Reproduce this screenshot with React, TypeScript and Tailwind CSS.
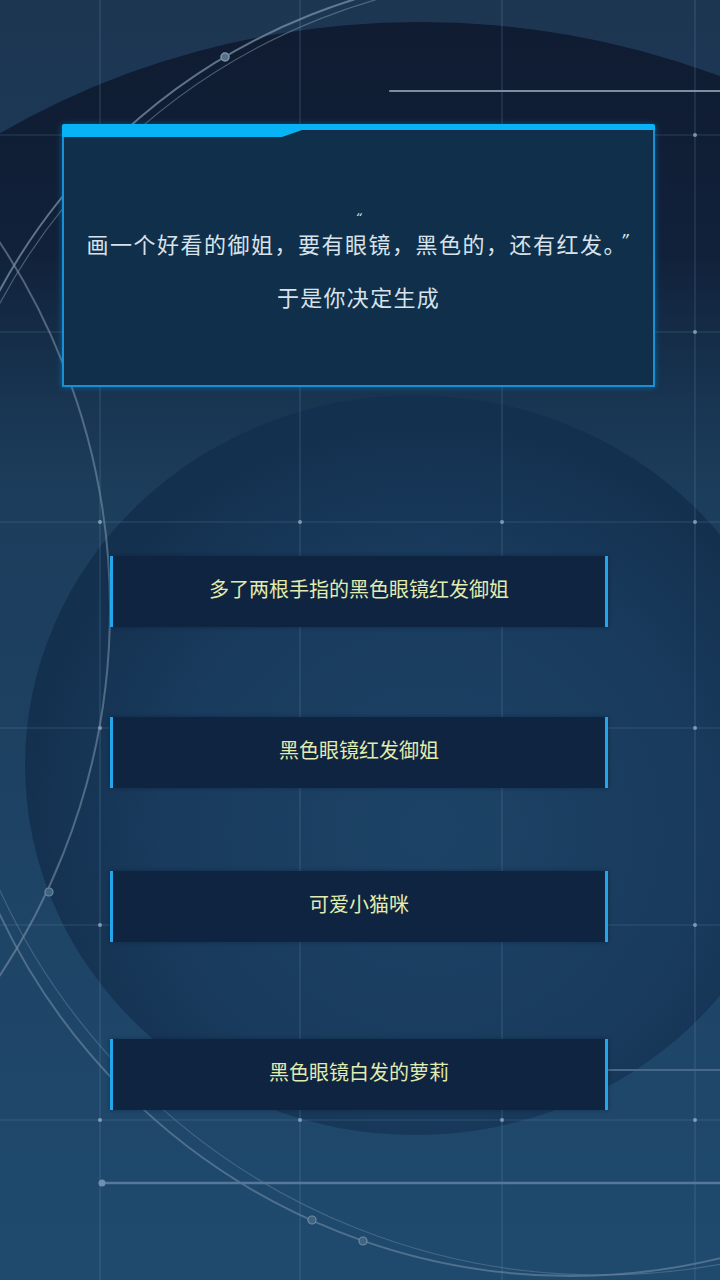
import React from "react";

const vLines = [100, 300, 502, 695];
const hLines = [135, 332, 522, 728, 925, 1120];

function Background() {
  return (
    <svg
      width={720}
      height={1280}
      viewBox="0 0 720 1280"
      className="absolute inset-0"
    >
      <defs>
        <linearGradient id="bg" x1="0" y1="0" x2="0" y2="1280" gradientUnits="userSpaceOnUse">
          <stop offset="0" stopColor="#1c3652" />
          <stop offset="0.5" stopColor="#1d3f5f" />
          <stop offset="1" stopColor="#1f4a6e" />
        </linearGradient>
        <linearGradient id="topEl" x1="0" y1="0" x2="0" y2="1280" gradientUnits="userSpaceOnUse">
          <stop offset="0" stopColor="#0f1b30" stopOpacity="1" />
          <stop offset="0.2" stopColor="#11213a" stopOpacity="1" />
          <stop offset="0.3" stopColor="#15304b" stopOpacity="0.8" />
          <stop offset="0.4" stopColor="#1a3a58" stopOpacity="0" />
        </linearGradient>
        <radialGradient id="c2" cx="430" cy="830" r="410" gradientUnits="userSpaceOnUse">
          <stop offset="0" stopColor="#1c4366" />
          <stop offset="0.65" stopColor="#193b5d" />
          <stop offset="1" stopColor="#14304f" />
        </radialGradient>
        <clipPath id="topClip">
          <rect x="0" y="0" width="380" height="520" />
        </clipPath>
        <clipPath id="botClip">
          <rect x="0" y="800" width="720" height="480" />
        </clipPath>
      </defs>
      <rect x="0" y="0" width="720" height="1280" fill="url(#bg)" />
      <ellipse cx="420" cy="700" rx="765" ry="678" fill="url(#topEl)" />
      <ellipse cx="415" cy="765" rx="390" ry="370" fill="url(#c2)" />

      {vLines.map((x) => (
        <line key={"v" + x} x1={x} y1={0} x2={x} y2={1280} stroke="#6f93b5" strokeOpacity="0.28" strokeWidth="1.2" />
      ))}
      {hLines.map((y) => (
        <line key={"h" + y} x1={0} y1={y} x2={720} y2={y} stroke="#6f93b5" strokeOpacity="0.28" strokeWidth="1.2" />
      ))}
      {hLines.map((y) =>
        vLines.map((x) => (
          <circle key={"d" + x + "-" + y} cx={x} cy={y} r="2" fill="#9fbad2" fillOpacity="0.7" />
        ))
      )}

      <g clipPath="url(#topClip)" fill="none">
        <circle cx="535" cy="581" r="609" stroke="#7890a6" strokeOpacity="0.75" strokeWidth="2" />
        <circle cx="550" cy="600" r="625" stroke="#7890a6" strokeOpacity="0.55" strokeWidth="1.2" />
      </g>
      <g clipPath="url(#botClip)" fill="none">
        <circle cx="571" cy="644" r="632" stroke="#6f8aa3" strokeOpacity="0.6" strokeWidth="2" />
        <circle cx="601" cy="613" r="662" stroke="#6f8aa3" strokeOpacity="0.45" strokeWidth="1.2" />
      </g>
      <circle cx="-554" cy="609" r="664" fill="none" stroke="#7890a6" strokeOpacity="0.6" strokeWidth="2" />

      <circle cx="225" cy="57" r="4" fill="#55708a" stroke="#8096ab" strokeWidth="1.5" />
      <circle cx="49" cy="892" r="4" fill="#3f6482" stroke="#6f8aa3" strokeWidth="1.2" />
      <circle cx="312" cy="1220" r="4" fill="#3f6482" stroke="#6f8aa3" strokeWidth="1.2" />
      <circle cx="363" cy="1241" r="4" fill="#3f6482" stroke="#6f8aa3" strokeWidth="1.2" />

      <line x1="390" y1="91" x2="720" y2="91" stroke="#7d8ea0" strokeWidth="2.2" strokeLinecap="round" />
      <line x1="100" y1="1183" x2="720" y2="1183" stroke="#56789a" strokeWidth="2.6" strokeLinecap="round" />
      <circle cx="102" cy="1183" r="3.5" fill="#6f8fae" />
      <line x1="608" y1="1070" x2="720" y2="1070" stroke="#46698a" strokeWidth="2" />
    </svg>
  );
}

function CardTopBar() {
  return (
    <svg
      width={593}
      height={14}
      viewBox="0 0 593 14"
      className="absolute -top-[1px] -left-[2px] block"
    >
      <path
        d="M0 2 Q0 0 2 0 L591 0 Q593 0 593 2 L593 6 L240 6 L220 13 L0 13 Z"
        fill="#08b3f5"
      />
    </svg>
  );
}

function Choice({ text, mt }: { text: string; mt: string }) {
  return (
    <div
      className={`${mt} ml-[110px] w-[498px] h-[71px] flex items-center justify-center pb-[6px] bg-[#0f2440] border-l-[3px] border-r-[3px] border-[#23a6ea] shadow-[0_0_4px_rgba(10,20,40,0.4)]`}
    >
      <span className="text-[20px] leading-[28px] text-[#e2ecae]">{text}</span>
    </div>
  );
}

export default function App() {
  return (
    <div className="relative w-[720px] h-[1280px] overflow-hidden bg-[#1d3f5f] font-['Noto_Sans_CJK_SC','Noto_Sans',sans-serif]">
      <Background />
      <div className="relative flex flex-col">
        <div className="relative mt-[125px] ml-[62px] w-[593px] h-[262px] bg-[#0f2f4a] border-x-2 border-b-2 border-[#1b8fd3] shadow-[0_0_6px_rgba(20,170,255,0.45)] flex flex-col items-center pt-[86px] text-[#d8e2ea]">
          <CardTopBar />
          <div className="text-[13px] leading-[14px] italic font-['DejaVu_Sans',sans-serif] text-[#cfdbe6]">“</div>
          <div className="mt-[4px] text-[22px] leading-[28px] tracking-[1.5px] whitespace-nowrap">
            画一个好看的御姐，要有眼镜，黑色的，还有红发。<span className="ml-[4px] font-['DejaVu_Sans',sans-serif] italic text-[17px] relative -top-[6px]">”</span>
          </div>
          <div className="mt-[21px] text-[22px] leading-[28px] tracking-[1.3px]">于是你决定生成</div>
        </div>

        <Choice mt="mt-[169px]" text="多了两根手指的黑色眼镜红发御姐" />
        <Choice mt="mt-[90px]" text="黑色眼镜红发御姐" />
        <Choice mt="mt-[83px]" text="可爱小猫咪" />
        <Choice mt="mt-[97px]" text="黑色眼镜白发的萝莉" />
      </div>
    </div>
  );
}
